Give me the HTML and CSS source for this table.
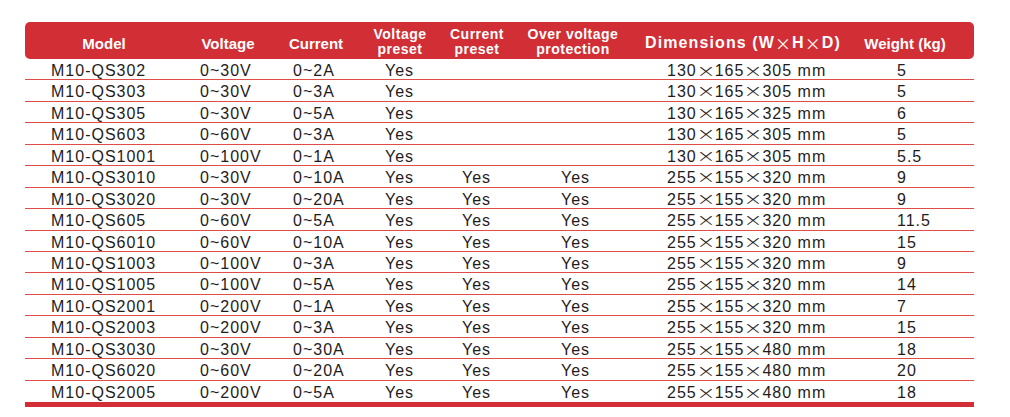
FILE: index.html
```html
<!DOCTYPE html>
<html>
<head>
<meta charset="utf-8">
<link rel="stylesheet" href="styles.css">
</head>
<body>
<div class="spec">
  <div class="head">
    <div class="hc">Model</div>
    <div class="hc">Voltage</div>
    <div class="hc">Current</div>
    <div class="hc two">Voltage<br>preset</div>
    <div class="hc two">Current<br>preset</div>
    <div class="hc two">Over voltage<br>protection</div>
    <div class="hc dim">Dimensions (W<span class="x">×</span>H<span class="x">×</span>D)</div>
    <div class="hc wt">Weight (kg)</div>
  </div>
  <div class="row"><span>M10-QS302</span><span>0~30V</span><span>0~2A</span><span>Yes</span><span></span><span></span><span>130<i>×</i>165<i>×</i>305 mm</span><span>5</span></div>
  <div class="row"><span>M10-QS303</span><span>0~30V</span><span>0~3A</span><span>Yes</span><span></span><span></span><span>130<i>×</i>165<i>×</i>305 mm</span><span>5</span></div>
  <div class="row"><span>M10-QS305</span><span>0~30V</span><span>0~5A</span><span>Yes</span><span></span><span></span><span>130<i>×</i>165<i>×</i>325 mm</span><span>6</span></div>
  <div class="row"><span>M10-QS603</span><span>0~60V</span><span>0~3A</span><span>Yes</span><span></span><span></span><span>130<i>×</i>165<i>×</i>305 mm</span><span>5</span></div>
  <div class="row"><span>M10-QS1001</span><span>0~100V</span><span>0~1A</span><span>Yes</span><span></span><span></span><span>130<i>×</i>165<i>×</i>305 mm</span><span>5.5</span></div>
  <div class="row"><span>M10-QS3010</span><span>0~30V</span><span>0~10A</span><span>Yes</span><span>Yes</span><span>Yes</span><span>255<i>×</i>155<i>×</i>320 mm</span><span>9</span></div>
  <div class="row"><span>M10-QS3020</span><span>0~30V</span><span>0~20A</span><span>Yes</span><span>Yes</span><span>Yes</span><span>255<i>×</i>155<i>×</i>320 mm</span><span>9</span></div>
  <div class="row"><span>M10-QS605</span><span>0~60V</span><span>0~5A</span><span>Yes</span><span>Yes</span><span>Yes</span><span>255<i>×</i>155<i>×</i>320 mm</span><span>11.5</span></div>
  <div class="row"><span>M10-QS6010</span><span>0~60V</span><span>0~10A</span><span>Yes</span><span>Yes</span><span>Yes</span><span>255<i>×</i>155<i>×</i>320 mm</span><span>15</span></div>
  <div class="row"><span>M10-QS1003</span><span>0~100V</span><span>0~3A</span><span>Yes</span><span>Yes</span><span>Yes</span><span>255<i>×</i>155<i>×</i>320 mm</span><span>9</span></div>
  <div class="row"><span>M10-QS1005</span><span>0~100V</span><span>0~5A</span><span>Yes</span><span>Yes</span><span>Yes</span><span>255<i>×</i>155<i>×</i>320 mm</span><span>14</span></div>
  <div class="row"><span>M10-QS2001</span><span>0~200V</span><span>0~1A</span><span>Yes</span><span>Yes</span><span>Yes</span><span>255<i>×</i>155<i>×</i>320 mm</span><span>7</span></div>
  <div class="row"><span>M10-QS2003</span><span>0~200V</span><span>0~3A</span><span>Yes</span><span>Yes</span><span>Yes</span><span>255<i>×</i>155<i>×</i>320 mm</span><span>15</span></div>
  <div class="row"><span>M10-QS3030</span><span>0~30V</span><span>0~30A</span><span>Yes</span><span>Yes</span><span>Yes</span><span>255<i>×</i>155<i>×</i>480 mm</span><span>18</span></div>
  <div class="row"><span>M10-QS6020</span><span>0~60V</span><span>0~20A</span><span>Yes</span><span>Yes</span><span>Yes</span><span>255<i>×</i>155<i>×</i>480 mm</span><span>20</span></div>
  <div class="row last"><span>M10-QS2005</span><span>0~200V</span><span>0~5A</span><span>Yes</span><span>Yes</span><span>Yes</span><span>255<i>×</i>155<i>×</i>480 mm</span><span>18</span></div>
  <div class="bar"></div>
</div>
</body>
</html>
```

FILE: styles.css
```css
html, body {
  margin: 0;
  padding: 0;
  background: #ffffff;
}
body {
  width: 1010px;
  height: 417px;
  overflow: hidden;
}
.spec {
  margin: 22px 0 0 25px;
  width: 949px;
}
.head, .row {
  display: grid;
  grid-template-columns: 158px 90px 86px 82px 72px 120px 220px 121px;
}
.head {
  height: 37px;
  background: #d12e35;
  border-radius: 5px;
  color: #ffffff;
  font-family: "Liberation Sans", Arial, sans-serif;
  font-weight: bold;
  font-size: 15px;
}
.hc {
  display: flex;
  align-items: center;
  justify-content: center;
  text-align: center;
  padding-top: 5px;
  white-space: nowrap;
}
.hc.two {
  font-size: 14px;
  letter-spacing: 0.5px;
  line-height: 15px;
  padding-top: 3px;
}
.hc.dim {
  font-size: 16px;
  letter-spacing: 1.1px;
}
.hc.wt {
  padding-right: 17px;
}
.x {
  font-style: normal;
  font-family: "Noto Sans CJK SC", sans-serif;
  font-weight: normal;
}
.row i {
  display: inline-block;
  width: 18px;
  text-align: center;
  font-style: normal;
  font-family: "DejaVu Sans", sans-serif;
  font-weight: 200;
  font-size: 16px;
  letter-spacing: 0;
  line-height: 16px;
  transform: scale(1.45, 1.1);
}
.row {
  height: 21.45px;
  box-sizing: border-box;
  padding-top: 2px;
  border-bottom: 1px solid #de4d47;
  font-family: "Liberation Sans", Arial, sans-serif;
  font-size: 16px;
  letter-spacing: 1px;
  color: #1f1c1d;
  line-height: 19px;
}
.row.last {
  border-bottom: none;
}
.row span {
  white-space: nowrap;
}
.row span:nth-child(1) { padding-left: 26px; }
.row span:nth-child(2) { padding-left: 17px; }
.row span:nth-child(3) { padding-left: 20px; }
.row span:nth-child(4) { padding-left: 26px; }
.row span:nth-child(5) { padding-left: 21px; }
.row span:nth-child(6) { padding-left: 48px; }
.row span:nth-child(7) { padding-left: 34px; }
.row span:nth-child(8) { padding-left: 44px; }
.bar {
  height: 5px;
  background: #d12e35;
}
```
